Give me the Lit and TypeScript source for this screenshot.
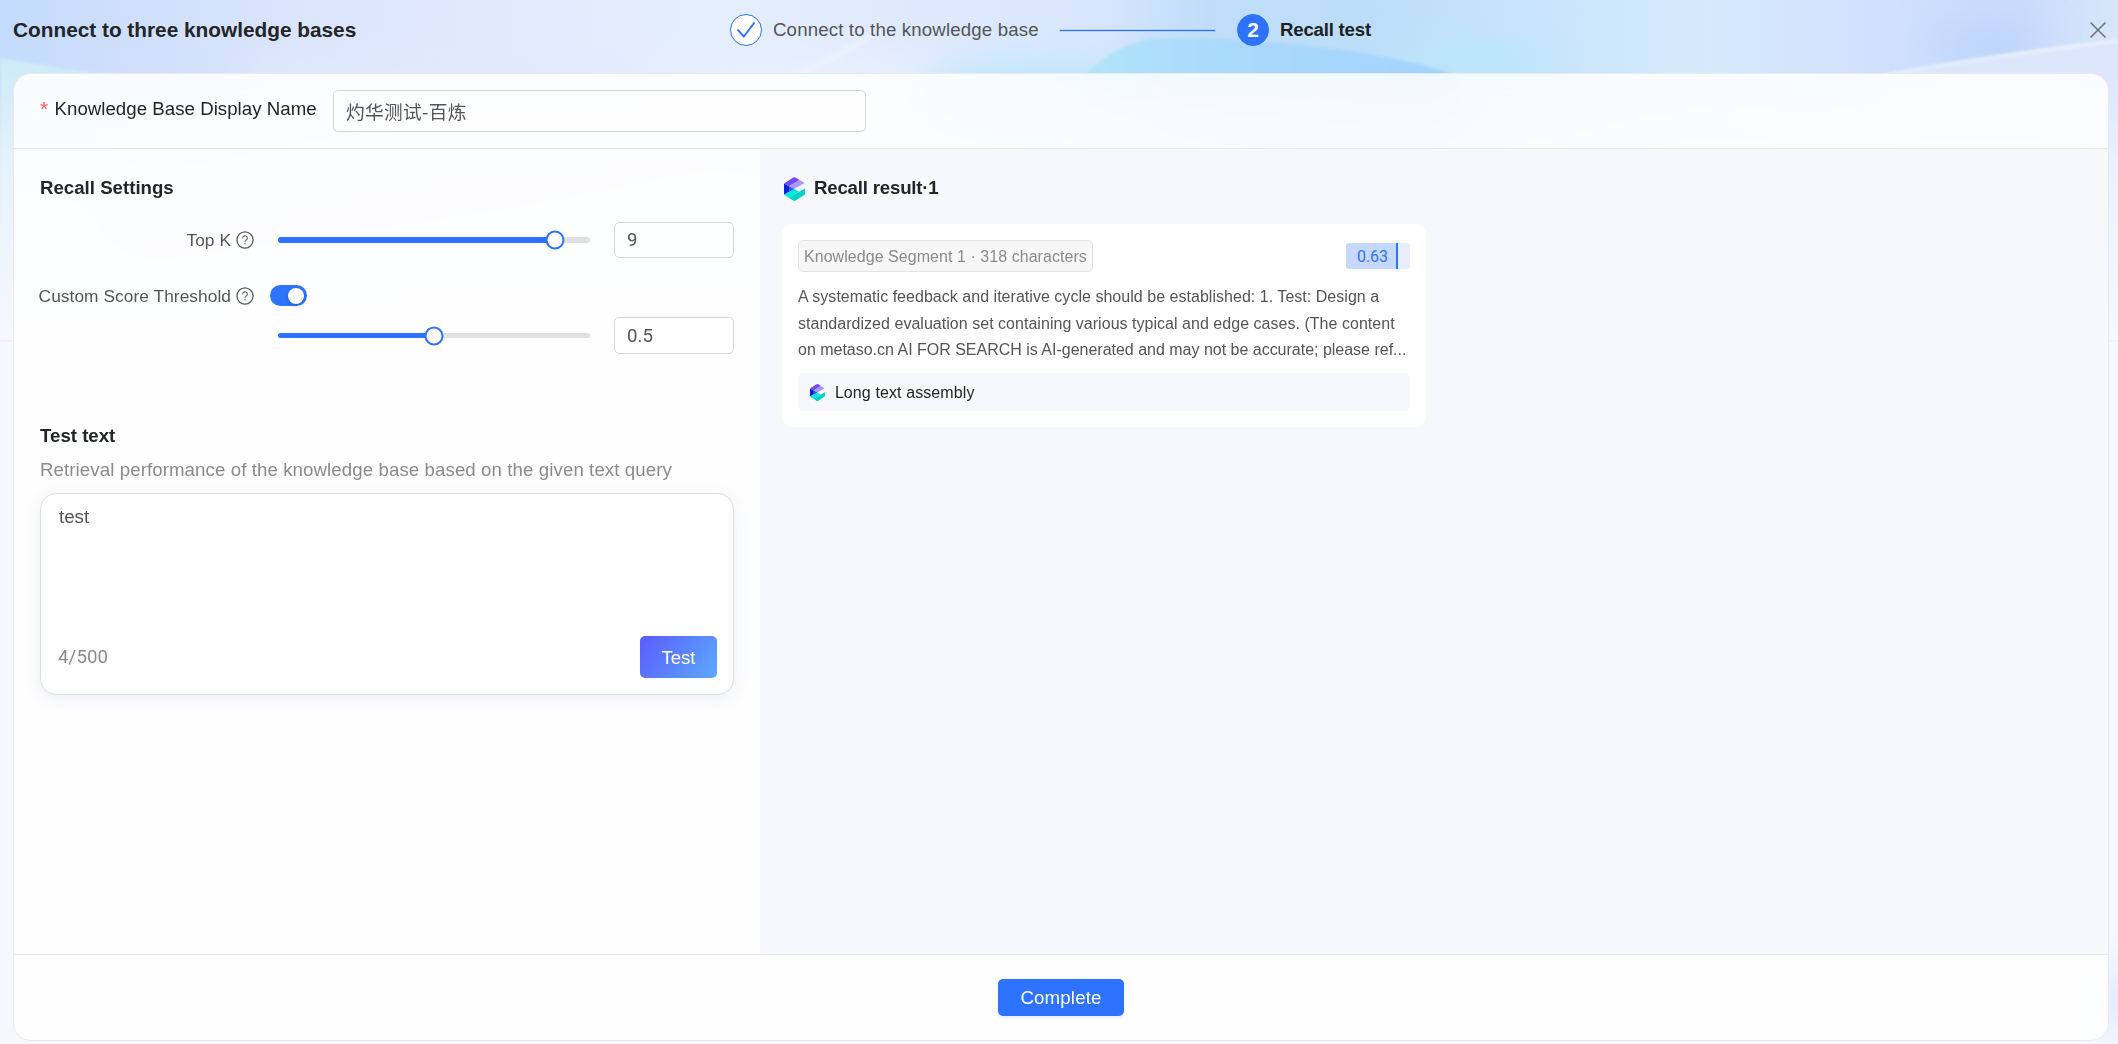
import { LitElement, html, css, svg } from "lit";
import { customElement, property, state } from "lit/decorators.js";

const questionIcon = html`<svg width="18" height="18" viewBox="0 0 18 18" fill="none" stroke="#5a5a5a" stroke-width="1.25">
  <circle cx="9" cy="9" r="8.100" />
  <path d="M6.700 7.200a2.300 2.300 0 1 1 3.500 1.900c-.85.5-1.200.8-1.200 1.600" stroke-width="1.100" />
  <circle cx="9" cy="12.800" r=".75" fill="#5a5a5a" stroke="none" />
</svg>`;

@customElement("brand-mark")
export class BrandMark extends LitElement {
  @property({ type: Number }) size = 24;

  static styles = css`
    :host { display: block; flex: none; line-height: 0; }
  `;

  render() {
    return html`<svg width=${this.size * 0.875} height=${this.size} viewBox="0 0 21 24">
      <path d="M0 6.500v11.300L10.400 12z" fill="#0b1fd6" />
      <path d="M5 9.200v5.800l5.400-3z" fill="#2f5cf0" />
      <path d="M0 6.400 9.200.5q1.200-.7 2.400 0l4 2.400L5 9.300z" fill="#7448fb" />
      <path d="M5 9.300 15.600 2.900l5 3.100L10 12z" fill="#a893ff" />
      <path d="M0 17.800 10.300 12l5 2.800L5 20.800z" fill="#00ecd2" />
      <path d="M5 20.800 21 11.600v6l-9.400 5.900q-1.200.7-2.400 0z" fill="#00d0c8" />
    </svg>`;
  }
}

@customElement("range-slider")
export class RangeSlider extends LitElement {
  @property({ type: Number }) percent = 0;
  @property({ type: Number }) thickness = 6;

  static styles = css`
    :host { display: flex; align-items: center; height: 20px; }
    .rail { position: relative; width: 100%; border-radius: 3px; background: #e1e1e1; }
    .fill { height: 100%; border-radius: 3px; background: #2d73ff; }
    .thumb {
      position: absolute; top: 50%; width: 19px; height: 19px; box-sizing: border-box;
      border: 2px solid #2d73ff; border-radius: 50%; background: #fff;
      transform: translate(-50%, -50%);
    }
  `;

  render() {
    return html`<div class="rail" style="height:${this.thickness}px">
      <div class="fill" style="width:${this.percent}%"></div>
      <div class="thumb" style="left:${this.percent}%"></div>
    </div>`;
  }
}

const backdrop = svg`
  <defs>
    <linearGradient id="sky" x1="0" x2="1" y1="0" y2="0">
      <stop offset="0" stop-color="#c3dbfd" />
      <stop offset=".06" stop-color="#cfdffc" />
      <stop offset=".14" stop-color="#dbe5fc" />
      <stop offset=".23" stop-color="#e3e9fd" />
      <stop offset=".34" stop-color="#e4eefd" />
      <stop offset=".44" stop-color="#dfe9fd" />
      <stop offset=".52" stop-color="#d8e6fd" />
      <stop offset=".57" stop-color="#bfddf9" />
      <stop offset=".65" stop-color="#bcdef9" />
      <stop offset=".72" stop-color="#c9e4fc" />
      <stop offset=".8" stop-color="#d4eafc" />
      <stop offset=".87" stop-color="#d3e2fd" />
      <stop offset=".95" stop-color="#c8dbfc" />
      <stop offset="1" stop-color="#d9e6f9" />
    </linearGradient>
    <linearGradient id="fade" x1="0" x2="0" y1="0" y2="1">
      <stop offset="0" stop-color="#f6f8fd" stop-opacity="0" />
      <stop offset=".22" stop-color="#f6f8fd" stop-opacity="0" />
      <stop offset=".5" stop-color="#f6f8fd" stop-opacity=".6" />
      <stop offset="1" stop-color="#f6f8fd" />
    </linearGradient>
    <linearGradient id="arc" x1="0" x2="1" y1="0" y2="0">
      <stop offset="0" stop-color="#b3e7f9" />
      <stop offset=".35" stop-color="#abdafb" />
      <stop offset="1" stop-color="#a3d3fe" />
    </linearGradient>
    <filter id="soft" x="-100%" y="-200%" width="300%" height="500%"><feGaussianBlur stdDeviation="20" /></filter>
    <filter id="edge" x="-10%" y="-50%" width="120%" height="200%"><feGaussianBlur stdDeviation="1.6" /></filter>
  </defs>
  <rect width="2118" height="1044" fill="#f6f8fd" />
  <rect width="2118" height="340" fill="url(#sky)" />
  <path d="M0 58Q50 66 110 76V340H0z" fill="#d0ebf8" filter="url(#edge)" />
  <ellipse cx="440" cy="90" rx="200" ry="34" fill="#e2e9fd" filter="url(#soft)" />
  <ellipse cx="800" cy="76" rx="150" ry="22" fill="#eaf0fd" filter="url(#soft)" />
  <ellipse cx="1040" cy="96" rx="120" ry="30" fill="#b7e8fb" filter="url(#soft)" />
  <ellipse cx="1480" cy="66" rx="80" ry="32" fill="#bce6f9" filter="url(#soft)" />
  <ellipse cx="1985" cy="46" rx="56" ry="18" fill="#b4cffa" fill-opacity=".75" filter="url(#soft)" />
  <path d="M790 78Q850 50 880 30" fill="none" stroke="#f1f6fe" stroke-opacity=".4" stroke-width="7" filter="url(#edge)" />
  <path d="M1085 76Q1105 50 1150 38.500Q1280 36 1400 60Q1440 68 1462 78V150H1060z" fill="url(#arc)" filter="url(#edge)" />
  <path d="M1885 76Q2000 54 2118 39V340H1800z" fill="#dee6fc" filter="url(#edge)" />
  <path d="M1885 75Q2000 54 2118 41" fill="none" stroke="#eef4fe" stroke-width="3.500" stroke-opacity=".8" filter="url(#edge)" />
  <rect width="2118" height="340" fill="url(#fade)" />
  <ellipse cx="2130" cy="1000" rx="28" ry="32" fill="#dae3fb" filter="url(#soft)" />
`;

@customElement("app-root")
export class AppRoot extends LitElement {
  @state() private query = "test";

  static styles = css`
    :host {
      display: block; position: relative; width: 2118px; height: 1044px; overflow: hidden;
      font-family: "Liberation Sans", Arial, "Noto Sans CJK SC", sans-serif;
      font-size: 18.67px; color: #232527;
    }
    * { box-sizing: border-box; }
    svg { display: block; flex: none; }
    .backdrop { position: absolute; inset: 0; }
    .page { position: relative; display: flex; flex-direction: column; height: 100%; padding: 0 9px 3px 13px; }

    .topbar { display: flex; align-items: center; height: 60px; margin-bottom: 13px; flex: none; }
    .title { width: 717px; font-size: 20.8px; font-weight: 700; line-height: 26px; white-space: nowrap; }
    .steps { display: flex; align-items: center; flex: 1; white-space: nowrap; }
    .badge {
      display: flex; align-items: center; justify-content: center; width: 32px; height: 32px;
      border-radius: 50%; border: 1px solid #2d73ff; background: #fff;
    }
    .badge.current { background: #2d73ff; color: #fff; font-size: 21px; font-weight: 700; line-height: 30px; }
    .step-label { width: 286px; margin-left: 11px; color: #52565b; letter-spacing: .15px; line-height: 30px; padding-bottom: 1px; }
    .step-label.current { width: auto; color: #1c1f23; font-weight: 700; letter-spacing: -.22px; }
    .link { width: 155px; height: 1px; background: #2d73ff; margin: 1px 22px 0 1px; box-shadow: 0 0 0 .5px rgba(45, 115, 255, .35); }
    .close { margin-right: 3px; }

    .sheet {
      flex: 1; display: flex; flex-direction: column; min-height: 0; border: 1px solid #e8eaed;
      border-radius: 18px; background: rgba(255, 255, 255, .84); backdrop-filter: blur(24px); overflow: hidden;
    }
    .name-row { display: flex; height: 75px; padding: 16px 26px 0; border-bottom: 1px solid #e5e7eb; flex: none; }
    .name-label { display: flex; gap: 6px; width: 293px; line-height: 37px; letter-spacing: .03px; white-space: nowrap; }
    .name-label i { width: 8.500px; color: #ff5a55; font-style: normal; font-size: 21px; }
    .field {
      display: flex; align-items: center; border: 1px solid #d5d7da; border-radius: 5px;
      color: #555; background: rgba(255, 255, 255, .5);
    }
    .name-field {
      width: 533px; height: 42px; padding-left: 12px; letter-spacing: .35px;
      font-family: "Noto Sans CJK SC", sans-serif; line-height: 30px; padding-bottom: 1px;
    }

    .body { flex: 1; display: flex; min-height: 0; }
    .settings { width: 746px; padding: 25px 26px 0; }
    .heading { font-weight: 700; line-height: 27px; white-space: nowrap; }
    .row {
      display: grid; grid-template-columns: 216px 312px 120px; column-gap: 24px; align-items: center;
      height: 36px; margin: 21px 0 0 -2px;
    }
    .row.threshold { display: flex; column-gap: 16px; height: 22px; margin-top: 27px; }
    .row.score { height: 37px; margin-top: 10px; }
    .row-label {
      display: flex; align-items: center; justify-content: flex-end; gap: 5px; width: 216px;
      font-size: 17.33px; line-height: 22px; color: #555; letter-spacing: .05px; white-space: nowrap;
    }
    .num { height: 100%; padding-left: 12px; font-family: Roboto, sans-serif; }
    .switch {
      display: flex; justify-content: flex-end; align-items: center; width: 37px; height: 21px;
      padding: 0 3px; border-radius: 11px; background: #2d73ff; margin-bottom: 1px;
    }
    .switch::after { content: ""; width: 16px; height: 16px; border-radius: 50%; background: #fff; box-shadow: 0 2px 4px rgba(0, 35, 11, .2); }
    .test-heading { margin-top: 68px; }
    .hint { margin-top: 7px; line-height: 27px; color: #8b8b8b; letter-spacing: .09px; white-space: nowrap; }
    .prompt {
      display: flex; flex-direction: column; justify-content: space-between; width: 694px; height: 202px; margin-top: 10px;
      padding: 9px 16px 16px 17px; border: 1px solid #dcdee2; border-radius: 16px; background: #fff;
      box-shadow: 0 4px 18px rgba(30, 50, 110, .07); color: #555; line-height: 27px;
    }
    .query { padding-left: 1px; }
    .prompt-foot { display: flex; justify-content: space-between; align-items: center; }
    .counter { font-family: Roboto, sans-serif; color: #8b8b8b; letter-spacing: .1px; }
    .button { display: flex; align-items: center; justify-content: center; border-radius: 5px; color: #fff; }
    .button.run { width: 77px; height: 42px; background: linear-gradient(125deg, #5b5bff, #5caaff); padding-top: 1px; letter-spacing: -.1px; }

    .results { flex: 1; padding: 25px 22px 0; background: #f7f8fc; }
    .results-head { display: flex; align-items: center; gap: 9px; height: 27px; margin-left: 2px; letter-spacing: -.2px; }
    .results-head brand-mark { margin-top: 2px; }
    .result { width: 644px; height: 203px; margin-top: 23px; padding: 16px; border-radius: 11px; background: #fff; font-size: 16px; }
    .result-top { display: flex; align-items: center; justify-content: space-between; }
    .tag {
      width: 295px; height: 32px; padding-left: 5px; border: 1px solid #e4e4e4; border-radius: 5px;
      background: #f7f7f7; color: #8b8b8b; line-height: 31px; letter-spacing: .05px; white-space: nowrap;
    }
    .meter { display: flex; width: 64px; height: 26px; border-radius: 3px; background: #e8eefe; overflow: hidden; }
    .meter-fill {
      flex: none; background: #c7d9ff; border-right: 2px solid #2d73ff; padding-left: 11px;
      color: #2d73ff; font: 16px/27px Roboto, sans-serif; letter-spacing: -.1px;
    }
    .excerpt { margin-top: 12px; color: #555; line-height: 26.600px; height: 79px; letter-spacing: .03px; }
    .excerpt span { display: block; white-space: nowrap; }
    .excerpt span:last-child { letter-spacing: -.01px; }
    .source {
      display: flex; align-items: center; gap: 10px; height: 38px; margin-top: 10px; padding-left: 12px;
      border-radius: 5px; background: #f7f8fc; letter-spacing: .1px;
    }
    .source span { padding-top: 1px; }
    .footer { display: flex; justify-content: center; height: 86px; padding-top: 24px; border-top: 1px solid #e8eaed; flex: none; }
    .button.done { width: 126px; height: 37px; background: #2d73ff; box-shadow: 0 2px 3px rgba(45, 115, 255, .1); letter-spacing: .15px; }
  `;

  render() {
    return html`
      <svg class="backdrop" width="2118" height="1044" viewBox="0 0 2118 1044">${backdrop}</svg>
      <div class="page">
        <header class="topbar">
          <div class="title">Connect to three knowledge bases</div>
          <div class="steps">
            <div class="badge">
              <svg width="20" height="18" viewBox="0 0 20 18" fill="none" stroke="#2d73ff" stroke-width="1.900"><path d="M1.500 8.700 7.800 15.500 18.500 1.500" /></svg>
            </div>
            <div class="step-label">Connect to the knowledge base</div>
            <div class="link"></div>
            <div class="badge current">2</div>
            <div class="step-label current">Recall test</div>
          </div>
          <svg class="close" width="16" height="16" viewBox="0 0 16 16" stroke="#6b7077" stroke-width="1.500"><path d="M.5.5l15 15M15.500.5l-15 15" /></svg>
        </header>

        <main class="sheet">
          <div class="name-row">
            <div class="name-label"><i>*</i><span>Knowledge Base Display Name</span></div>
            <div class="field name-field">灼华测试-百炼</div>
          </div>

          <div class="body">
            <section class="settings">
              <div class="heading">Recall Settings</div>
              <div class="row">
                <div class="row-label">Top K ${questionIcon}</div>
                <range-slider .percent=${88.9} .thickness=${6}></range-slider>
                <div class="field num">9</div>
              </div>
              <div class="row threshold">
                <div class="row-label">Custom Score Threshold ${questionIcon}</div>
                <div class="switch"></div>
              </div>
              <div class="row score">
                <span></span>
                <range-slider .percent=${50} .thickness=${5}></range-slider>
                <div class="field num">0.5</div>
              </div>

              <div class="heading test-heading">Test text</div>
              <div class="hint">Retrieval performance of the knowledge base based on the given text query</div>
              <div class="prompt">
                <div class="query">${this.query}</div>
                <div class="prompt-foot">
                  <span class="counter">${this.query.length}/500</span>
                  <div class="button run">Test</div>
                </div>
              </div>
            </section>

            <section class="results">
              <div class="results-head">
                <brand-mark .size=${24}></brand-mark>
                <div class="heading">Recall result·1</div>
              </div>
              <article class="result">
                <div class="result-top">
                  <div class="tag">Knowledge Segment 1 · 318 characters</div>
                  <div class="meter"><div class="meter-fill" style="width:52px">0.63</div></div>
                </div>
                <div class="excerpt">
                  <span>A systematic feedback and iterative cycle should be established: 1. Test: Design a</span>
                  <span>standardized evaluation set containing various typical and edge cases. (The content</span>
                  <span>on metaso.cn AI FOR SEARCH is AI-generated and may not be accurate; please ref...</span>
                </div>
                <div class="source">
                  <brand-mark .size=${17}></brand-mark>
                  <span>Long text assembly</span>
                </div>
              </article>
            </section>
          </div>

          <footer class="footer"><div class="button done">Complete</div></footer>
        </main>
      </div>
    `;
  }
}
